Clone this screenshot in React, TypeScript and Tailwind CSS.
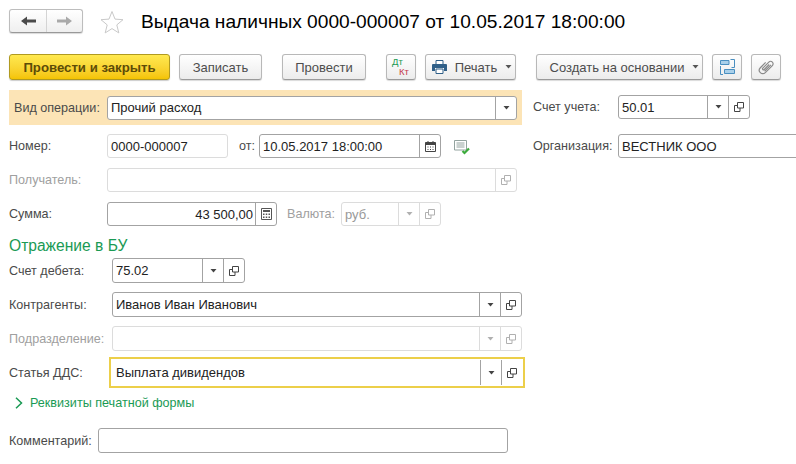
import type { ReactNode } from 'react';

const Arrow = () => (
  <svg width="7" height="4" viewBox="0 0 7 4">
    <path d="M.5 0h6L3.500 3.500z" fill="currentColor" />
  </svg>
);

const OpenIcon = () => (
  <svg width="10" height="10" viewBox="0 0 10 10" fill="none" stroke="currentColor" strokeWidth="1">
    <path d="M3.500.5h6v5.500h-6z" />
    <path d="M3.500 3.500h-3v6h5.500v-3.500" />
  </svg>
);

// сегмент справа в поле: выпадающий список или "открыть"
const Seg = ({ children, off }: { children: ReactNode; off?: boolean }) => (
  <div
    className={`w-[21px] h-full shrink-0 flex items-center justify-center border-l ${
      off ? 'border-[#dcdcdc] text-[#b0b0b0]' : 'border-[#a3a3a3] text-[#444]'
    }`}
  >
    {children}
  </div>
);

function Field({
  className,
  value,
  off,
  light,
  right,
  children,
}: {
  className: string;
  value?: string;
  off?: boolean;
  light?: boolean;
  right?: boolean;
  children?: ReactNode;
}) {
  return (
    <div
      className={`${className} flex items-center rounded-[3px] border bg-white overflow-hidden ${
        off || light ? 'border-[#dcdcdc]' : 'border-[#a3a3a3]'
      }`}
    >
      <div
        className={`flex-1 min-w-0 pt-[1px] text-[13px] whitespace-nowrap ${off ? 'text-[#999]' : 'text-[#222]'} ${
          right ? 'text-right pr-[2px]' : 'pl-[3px]'
        }`}
      >
        {value}
      </div>
      {children}
    </div>
  );
}

const Label = ({ className, children, off }: { className: string; children: ReactNode; off?: boolean }) => (
  <div className={`${className} shrink-0 pt-[1px] text-[12.6px] whitespace-nowrap ${off ? 'text-[#a0a0a0]' : 'text-[#4a4a4a]'}`}>
    {children}
  </div>
);

const btn =
  'h-[26px] shrink-0 flex items-center justify-center rounded-[3px] border border-[#b8b8b8] border-b-[#9a9a9a] bg-gradient-to-b from-white to-[#ececec] shadow-[0_1px_1px_rgba(0,0,0,0.15)] text-[13px] text-[#4d4d4d]';

export default function App() {
  return (
    <div className="w-[796px] h-[464px] overflow-hidden bg-white px-[9px] pt-2 font-['Liberation_Sans',Arial,sans-serif]">
      {/* Заголовок */}
      <div className="flex items-center h-[25px]">
        <div className="w-[74px] h-[24px] flex rounded-[3px] border border-[#bdbdbd] border-b-[#999] bg-gradient-to-b from-white to-[#efefef] shadow-[0_1px_1px_rgba(0,0,0,0.15)]">
          <div className="w-[37px] flex items-center justify-center border-r border-[#d4d4d4]">
            <svg width="15" height="10" viewBox="0 0 15 10">
              <path d="M0 5l6-4.500V3.500h9v3H6v3z" fill="#4a4a4a" />
            </svg>
          </div>
          <div className="flex-1 flex items-center justify-center">
            <svg width="15" height="10" viewBox="0 0 15 10">
              <path d="M15 5L9 .5V3.500H0v3h9v3z" fill="#a9a9a9" />
            </svg>
          </div>
        </div>
        <svg className="ml-[17px] mt-[2px]" width="24" height="24" viewBox="0 0 24 24" fill="none" stroke="#c9c9c9" strokeWidth="1">
          <path d="M12 1.500l3 7.600 8 .6-6.200 5.200 2 8L12 18.600l-6.800 4.300 2-8L1 9.700l8-.6z" />
        </svg>
        <div className="ml-[17px] mt-[3px] text-[19.15px] text-black whitespace-nowrap">
          Выдача наличных 0000-000007 от 10.05.2017 18:00:00
        </div>
      </div>

      {/* Командная панель */}
      <div className="flex mt-[21px]">
        <div className="w-[161px] h-[26px] flex items-center justify-center pt-[1px] rounded-[3px] border border-[#b09a20] bg-gradient-to-b from-[#ffe94f] to-[#f4c400] shadow-[0_1px_1px_rgba(0,0,0,0.2)] text-[13.2px] font-bold text-[#5c4c08]">
          Провести и закрыть
        </div>
        <div className={`${btn} w-[83px] ml-[9px] pt-[1px]`}>Записать</div>
        <div className={`${btn} w-[84px] ml-[20px] pt-[1px]`}>Провести</div>
        <div className={`${btn} w-[30px] ml-[20px] relative`}>
          <span className="absolute left-[5px] top-[2px] text-[9.5px] leading-[10px] text-[#1a9a54]">Дт</span>
          <span className="absolute left-[12px] top-[12px] text-[9.5px] leading-[10px] text-[#c43c4c]">Кт</span>
        </div>
        <div className={`${btn} w-[91px] ml-[9px] pl-[3px]`}>
          <svg width="15" height="14" viewBox="0 0 15 14">
            <path d="M4 .5h7v4H4z" fill="#fff" stroke="#2f5f88" />
            <path d="M1 4h13a1 1 0 0 1 1 1v6h-3V8H3v3H0V5a1 1 0 0 1 1-1z" fill="#2f5f88" />
            <path d="M4 9h7v4.500H4z" fill="#fff" stroke="#2f5f88" />
          </svg>
          <span className="ml-[8px] pt-[1px]">Печать</span>
          <span className="ml-[8px] text-[#555]">
            <Arrow />
          </span>
        </div>
        <div className={`${btn} w-[167px] ml-[20px]`}>
          <span className="ml-[10px] pt-[1px]">Создать на основании</span>
          <span className="ml-[8px] text-[#555]">
            <Arrow />
          </span>
        </div>
        <div className={`${btn} w-[30px] ml-[9px]`}>
          <svg width="15" height="16" viewBox="0 0 15 16" fill="none">
            <path d="M.5 1.500h8.500v4H.5zM4.500 10.500h10v4h-10z" fill="#a9d0ea" stroke="#4a8fc0" />
            <path d="M10.500.5h4v8h-3M.5 7v8.500H3" stroke="#4a8fc0" />
          </svg>
        </div>
        <div className={`${btn} w-[30px] ml-[9px]`}>
          <svg width="18" height="18" viewBox="0 0 18 18" fill="none" stroke="#8a8a8a" strokeWidth="1.200">
            <g transform="rotate(45 9 9)">
              <path d="M5.500 6v7.500a3.500 3.500 0 0 0 7 0V3.500a2.500 2.500 0 0 0-5 0V12a1 1 0 0 0 2 0V5" />
              <path d="M11 4v9" />
            </g>
          </svg>
        </div>
      </div>

      {/* Форма */}
      <div className="flex mt-[10px]">
        <div className="w-[516px] shrink-0">
          <div className="w-[513px] h-[35px] bg-[#fce4b6] flex items-center pl-[5px]">
            <Label className="w-[93px]">Вид операции:</Label>
            <Field className="w-[410px] h-[24px]" value="Прочий расход">
              <Seg>
                <Arrow />
              </Seg>
            </Field>
          </div>

          <div className="flex items-center mt-[9px] h-[24px]">
            <Label className="w-[98px]">Номер:</Label>
            <Field className="w-[121px] h-[24px]" light value="0000-000007" />
            <Label className="w-[31px] pl-[11px]">от:</Label>
            <Field className="w-[182px] h-[24px]" value="10.05.2017 18:00:00">
              <Seg>
                <svg width="11" height="11" viewBox="0 0 11 11">
                  <path d="M.5 1.500h10v9H.5z" fill="none" stroke="#444" />
                  <path d="M.5 1.500h10v2.500H.5zM2.500 0h1v2h-1zM7.500 0h1v2h-1z" fill="#444" />
                  <path d="M2.500 5.500h1v1h-1zM5 5.500h1v1H5zM7.500 5.500h1v1h-1zM2.500 8h1v1h-1zM5 8h1v1H5zM7.500 8h1v1h-1z" fill="#444" />
                </svg>
              </Seg>
            </Field>
            <svg className="ml-[13px] mt-[2px]" width="17" height="15" viewBox="0 0 17 15">
              <path d="M.5.500h12v9.500H.5z" fill="#fff" stroke="#93a39f" />
              <path d="M2.500 3h8M2.500 5h8M2.500 7h8" stroke="#93a39f" />
              <path d="M8.500 11l2 2 4.500-4.500" fill="none" stroke="#3dab3d" strokeWidth="2.200" />
            </svg>
          </div>

          <div className="flex items-center mt-[10px] h-[24px]">
            <Label off className="w-[98px]">
              Получатель:
            </Label>
            <Field off className="w-[410px] h-[24px]">
              <Seg off>
                <OpenIcon />
              </Seg>
            </Field>
          </div>

          <div className="flex items-center mt-[10px] h-[24px]">
            <Label className="w-[98px]">Сумма:</Label>
            <Field className="w-[170px] h-[24px]" right value="43 500,00">
              <Seg>
                <svg width="11" height="12" viewBox="0 0 11 12">
                  <path d="M.5.500h10v11H.5z" fill="none" stroke="#555" />
                  <path d="M2 2h7v2H2z" fill="#555" />
                  <path d="M2 5.500h1.500v1.500H2zM4.750 5.500h1.500v1.500h-1.500zM7.500 5.500H9v1.500H7.500zM2 8.500h1.500V10H2zM4.750 8.500h1.500V10h-1.500zM7.500 8.500H9V10H7.500z" fill="#555" />
                </svg>
              </Seg>
            </Field>
            <Label off className="w-[64px] pl-[10px]">
              Валюта:
            </Label>
            <Field off className="w-[100px] h-[24px]" value="руб.">
              <Seg off>
                <Arrow />
              </Seg>
              <Seg off>
                <OpenIcon />
              </Seg>
            </Field>
          </div>

          <div className="mt-[9px] h-[23px] text-[15.6px] leading-[22px] text-[#1a9a54] whitespace-nowrap">Отражение в БУ</div>

          <div className="flex items-center h-[25px]">
            <Label className="w-[103px]">Счет дебета:</Label>
            <Field className="w-[133px] h-[25px]" value="75.02">
              <Seg>
                <Arrow />
              </Seg>
              <Seg>
                <OpenIcon />
              </Seg>
            </Field>
          </div>

          <div className="flex items-center mt-[9px] h-[25px]">
            <Label className="w-[103px]">Контрагенты:</Label>
            <Field className="w-[410px] h-[25px]" value="Иванов Иван Иванович">
              <Seg>
                <Arrow />
              </Seg>
              <Seg>
                <OpenIcon />
              </Seg>
            </Field>
          </div>

          <div className="flex items-center mt-[9px] h-[25px]">
            <Label off className="w-[103px]">
              Подразделение:
            </Label>
            <Field off className="w-[410px] h-[25px]">
              <Seg off>
                <Arrow />
              </Seg>
              <Seg off>
                <OpenIcon />
              </Seg>
            </Field>
          </div>

          <div className="flex items-center mt-[6px] h-[31px]">
            <Label className="w-[100px]">Статья ДДС:</Label>
            <div className="w-[416px] h-[31px] border-2 border-[#eccf4a] flex items-center pl-[5px] bg-white">
              <div className="flex-1 pt-[1px] text-[13px] text-[#222]">Выплата дивидендов</div>
              <div className="h-[25px] flex">
                <Seg>
                  <Arrow />
                </Seg>
                <Seg>
                  <OpenIcon />
                </Seg>
              </div>
              <div className="w-[1px]" />
            </div>
          </div>

          <div className="flex items-center mt-[7px] h-[16px] pl-[6px] text-[12.6px] text-[#1a9a54]">
            <svg width="8" height="12" viewBox="0 0 8 12" fill="none" stroke="#1a9a54" strokeWidth="1.500">
              <path d="M1 .8l5.500 5.200-5.500 5.200" />
            </svg>
            <span className="ml-[7px]">Реквизиты печатной формы</span>
          </div>

          <div className="flex items-center mt-[17px] h-[25px]">
            <Label className="w-[89px]">Комментарий:</Label>
            <Field className="w-[410px] h-[25px]" />
          </div>
        </div>

        {/* Правая колонка */}
        <div className="ml-[8px] pt-[5px]">
          <div className="flex items-center h-[24px]">
            <Label className="w-[85px]">Счет учета:</Label>
            <Field className="w-[132px] h-[24px]" value="50.01">
              <Seg>
                <Arrow />
              </Seg>
              <Seg>
                <OpenIcon />
              </Seg>
            </Field>
          </div>
          <div className="flex items-center mt-[15px] h-[24px]">
            <Label className="w-[85px]">Организация:</Label>
            <Field className="w-[200px] h-[24px]" value="ВЕСТНИК ООО" />
          </div>
        </div>
      </div>
    </div>
  );
}
